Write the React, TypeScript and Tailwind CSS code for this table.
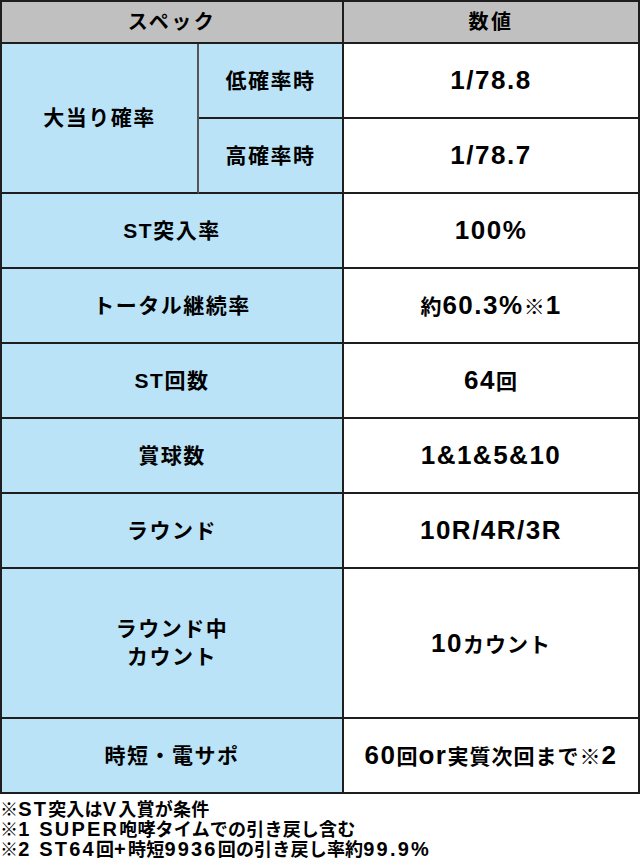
import React from 'react';

const font = { fontFamily: '"Liberation Sans", "Noto Sans CJK JP", sans-serif' };

// Latin runs and Japanese runs are set at different sizes, as in the reference
function Mixed({ text, latin, cjk }: { text: string; latin: string; cjk: string }) {
  const parts = text.split(/([\x20-\x7E]+)/).filter(Boolean);
  return (
    <span>
      {parts.map((p, i) =>
        /^[\x20-\x7E]+$/.test(p) ? (
          <span key={i} className={latin}>{p}</span>
        ) : (
          <span key={i} className={cjk}>{p}</span>
        )
      )}
    </span>
  );
}

const rows: { label: React.ReactNode; value: string }[] = [
  { label: 'ST突入率', value: '100%' },
  { label: 'トータル継続率', value: '約60.3%※1' },
  { label: 'ST回数', value: '64回' },
  { label: '賞球数', value: '1&1&5&10' },
  { label: 'ラウンド', value: '10R/4R/3R' },
  { label: <>ラウンド中<br />カウント</>, value: '10カウント' },
  { label: '時短・電サポ', value: '60回or実質次回まで※2' },
];

const notes = [
  '※ST突入はV入賞が条件',
  '※1 SUPER咆哮タイムでの引き戻し含む',
  '※2 ST64回+時短9936回の引き戻し率約99.9%',
];

export default function App() {
  const cell = 'flex items-center justify-center text-center border-r-2 border-b-2 border-[#1e1e1e] font-bold text-black';

  const Value = ({ text }: { text: string }) => (
    <Mixed text={text} latin="text-[26px] tracking-[1.5px]" cjk="text-[21px] tracking-[1px]" />
  );

  return (
    <div className="w-[640px] h-[861px] bg-white overflow-hidden" style={font}>
      {/* Spec table */}
      <div className="grid grid-cols-[197px_145px_1fr] grid-rows-[42px_75px_75px_75px_75px_75px_75px_75px_150px_75px] border-t-2 border-l-2 border-[#1e1e1e]">
        <div className={`${cell} col-span-2 bg-[#c0c0c0] text-[20px] tracking-[2.5px]`}>スペック</div>
        <div className={`${cell} bg-[#c0c0c0] text-[20px] tracking-[2.5px]`}>数値</div>

        <div className={`${cell} row-span-2 bg-[#bae3f8] text-[21px] tracking-[1.5px] !border-r-[#555]`}>大当り確率</div>
        <div className={`${cell} bg-[#bae3f8] text-[21px] tracking-[1.5px]`}>低確率時</div>
        <div className={`${cell} bg-white`}><Value text="1/78.8" /></div>
        <div className={`${cell} bg-[#bae3f8] text-[21px] tracking-[1.5px]`}>高確率時</div>
        <div className={`${cell} bg-white`}><Value text="1/78.7" /></div>

        {rows.map((r, i) => (
          <React.Fragment key={i}>
            <div className={`${cell} col-span-2 bg-[#bae3f8] text-[21px] leading-[28px] tracking-[1.5px]`}>{r.label}</div>
            <div className={`${cell} bg-white`}><Value text={r.value} /></div>
          </React.Fragment>
        ))}
      </div>

      {/* Notes */}
      <div className="pt-[5px] text-[18px] leading-[20px] font-bold text-black">
        {notes.map((n) => (
          <p key={n} className="h-[20px] leading-[20px]">
            <Mixed
              text={n}
              latin="text-[20px] leading-[20px] tracking-[2.2px]"
              cjk="text-[18px] leading-[20px] tracking-[0.2px]"
            />
          </p>
        ))}
      </div>
    </div>
  );
}
